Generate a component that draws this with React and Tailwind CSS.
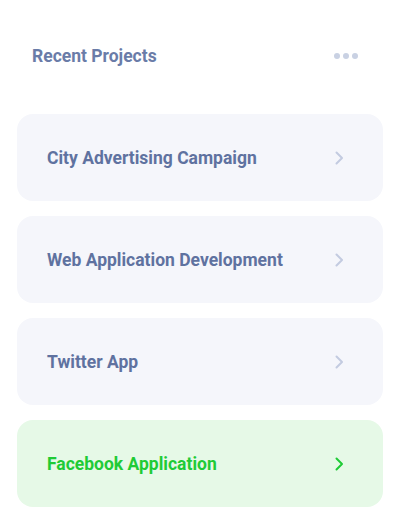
import React from 'react'

const projects = [
  { name: 'City Advertising Campaign', active: false },
  { name: 'Web Application Development', active: false },
  { name: 'Twitter App', active: false },
  { name: 'Facebook Application', active: true },
]

const Chevron = ({ className }) => (
  <svg width="12" height="16" viewBox="0 0 12 16" fill="none" className={className}>
    <path d="M3.5 2.5L9 8L3.5 13.5" stroke="currentColor" strokeWidth="2" strokeLinecap="round" strokeLinejoin="round" />
  </svg>
)

export default function App() {
  return (
    <div className="w-[402px] h-[527px] overflow-hidden bg-white" style={{ fontFamily: 'Roboto, "Open Sans", sans-serif' }}>
      <div className="-ml-[9px] -mt-[9px] w-[420px] h-[545px] rounded-[22px] border border-gray-300 bg-white pl-[8px] pt-[8px]">
        <div className="w-[402px]">
          {/* Header */}
          <div className="flex items-center justify-between pl-[32px] pr-[44px] pt-[2px] h-[110px]">
            <h2 className="text-[17.5px] font-bold text-[#6a7ca8]">Recent Projects</h2>
            <div className="flex gap-[3px]">
              <span className="w-[6px] h-[6px] rounded-full bg-[#c9d1e3]" />
              <span className="w-[6px] h-[6px] rounded-full bg-[#c9d1e3]" />
              <span className="w-[6px] h-[6px] rounded-full bg-[#c9d1e3]" />
            </div>
          </div>

          {/* List */}
          <div className="flex flex-col gap-[15px] pl-[17px] pt-[4px]">
            {projects.map((p) => (
              <div
                key={p.name}
                className={`flex items-center justify-between w-[366px] h-[87px] rounded-[16px] pl-[30px] pr-[38px] pt-[1px] ${
                  p.active ? 'bg-[#e6f9e7]' : 'bg-[#f5f6fb]'
                }`}
              >
                <span className={`text-[17.5px] font-bold ${p.active ? 'text-[#1fcb36]' : 'text-[#5f72a0]'}`}>
                  {p.name}
                </span>
                <Chevron className={p.active ? 'text-[#1fcb36]' : 'text-[#c3cbe0]'} />
              </div>
            ))}
          </div>
        </div>
      </div>
    </div>
  )
}
